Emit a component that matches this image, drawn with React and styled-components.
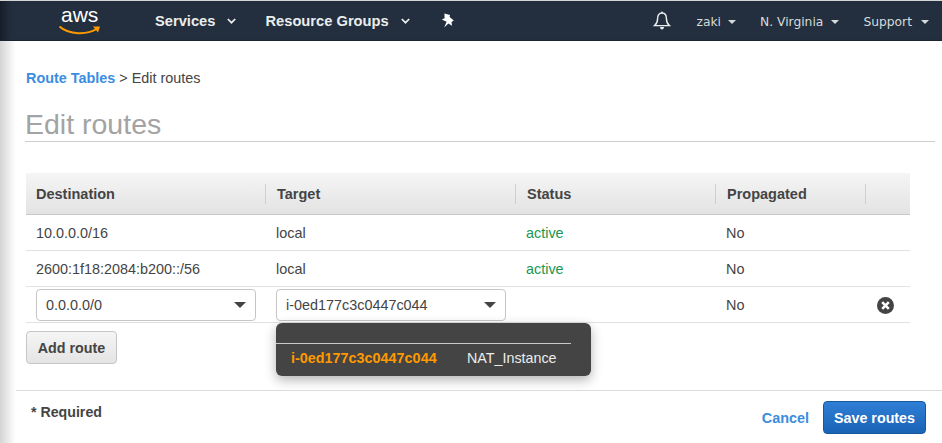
import styled, { createGlobalStyle } from 'styled-components';

const GlobalStyle = createGlobalStyle`
  html, body {
    margin: 0;
    padding: 0;
    background: #fff;
    overflow: hidden;
  }

  body {
    font-family: "Liberation Sans", Arial, sans-serif;
    font-size: 14.4px;
    color: #444;
  }
`;

const Page = styled.div`
  width: 942px;
  height: 443px;
  overflow: hidden;
  display: flex;
  flex-direction: column;
  border-top: 1px solid #d5d5d5;
  box-sizing: border-box;
`;

const TopBar = styled.header`
  flex: none;
  height: 40px;
  background: #232f3e;
  display: flex;
  align-items: center;
  box-shadow: inset 12px 0 10px -8px #131a24;
  border-bottom: 1px solid #1b2532;
  box-sizing: border-box;
`;

const LogoBox = styled.div`
  width: 155px;
  display: flex;
  padding-left: 58px;
  box-sizing: border-box;
`;

const NavMain = styled.a`
  display: flex;
  align-items: center;
  color: #eaeded;
  font-weight: 700;
  font-size: 14.7px;
  margin-right: ${(p) => p.$gap}px;
`;

const NavSide = styled.a`
  display: flex;
  align-items: center;
  color: #d5dbdb;
  font-family: "DejaVu Sans", Verdana, sans-serif;
  font-size: 12.3px;
  padding-top: 3px;
  margin-left: ${(p) => p.$gap}px;
`;

const Spacer = styled.div`
  flex: 1;
`;

const EdgeGap = styled.div`
  flex: none;
  width: 13px;
`;

const Body = styled.main`
  flex: 1;
  display: flex;
  min-height: 0;
`;

const SideShade = styled.div`
  flex: none;
  width: 16px;
  background: linear-gradient(90deg, #d4d4d4 0%, #e6e6e6 40%, #fafafa 85%, #fff 100%);
`;

const Content = styled.div`
  flex: 1;
  min-width: 0;
  display: flex;
  flex-direction: column;
`;

const Crumbs = styled.nav`
  margin: 29px 0 0 10px;
  line-height: 16px;
  color: #444;
`;

const CrumbLink = styled.a`
  color: #3b8de0;
  font-weight: 700;
`;

const Title = styled.h1`
  margin: 16px 7px 0 9px;
  height: 40px;
  line-height: 44px;
  box-sizing: border-box;
  font-size: 28.5px;
  font-weight: 400;
  color: #a3a3a3;
  border-bottom: 1px solid #ccc;
`;

const Table = styled.div`
  margin: 31px 0 0 10px;
  width: 884px;
`;

const Row = styled.div`
  display: grid;
  grid-template-columns: 240px 250px 200px 150px 44px;
  height: ${(p) => p.$h}px;
  box-sizing: border-box;
  align-items: center;
  border-bottom: 1px solid #e1e1e1;
`;

const HeadRow = styled(Row)`
  background: linear-gradient(#f5f5f5, #e3e3e3);
  border-bottom: 1px solid #c8c8c8;
`;

const HeadCell = styled.div`
  height: 20px;
  line-height: 20px;
  padding-left: ${(p) => (p.$first ? 10 : 11)}px;
  font-weight: 700;
  font-size: 14.5px;
  color: #444;
  border-right: ${(p) => (p.$last ? 'none' : '1px solid #cfcfcf')};
  box-sizing: border-box;
`;

const Cell = styled.div`
  padding-left: 10px;
  color: ${(p) => (p.$status ? '#1a9650' : '#444')};
  position: relative;
`;

const ControlCell = styled(Cell)`
  padding-left: 0;
`;

const SelectBox = styled.div`
  width: ${(p) => p.$w}px;
  height: 32px;
  margin-left: 10px;
  border: 1px solid #c6c6c6;
  border-radius: 4px;
  box-sizing: border-box;
  background: #fff;
  display: flex;
  align-items: center;
  justify-content: space-between;
  padding: 0 9px;
  color: #444;
`;

const Caret = styled.span`
  width: 0;
  height: 0;
  border-left: 6px solid transparent;
  border-right: 6px solid transparent;
  border-top: 6px solid #444;
`;

const Dropdown = styled.div`
  position: absolute;
  left: 10px;
  top: 34px;
  width: 315px;
  height: 53px;
  background: #444;
  border-radius: 6px;
  box-shadow: 0 4px 12px rgba(0, 0, 0, 0.3);
  z-index: 2;
`;

const DropRule = styled.div`
  padding-top: 20px;
  width: 295px;
  border-bottom: 1px solid #c8c8c8;
`;

const DropItem = styled.div`
  display: flex;
  padding: 6px 0 0 15px;
  line-height: 16px;
`;

const DropId = styled.span`
  width: 176px;
  color: #f90;
  font-weight: 700;
`;

const DropName = styled.span`
  color: #eaeded;
  font-size: 14.3px;
`;

const RemoveCell = styled.div`
  display: flex;
  justify-content: flex-end;
  padding: 1px 16px 0 0;
`;

const Plain = styled.button`
  font-family: inherit;
  font-weight: 700;
  font-size: 14.3px;
  padding: 0;
  box-sizing: border-box;
  border-radius: 4px;
`;

const AddButton = styled(Plain)`
  margin: 8px 0 0 10px;
  width: 91px;
  height: 33px;
  align-self: flex-start;
  color: #444;
  border: 1px solid #c6c6c6;
  background: linear-gradient(#f5f5f5, #e4e4e4);
`;

const Footer = styled.footer`
  margin-top: 26px;
  height: 53px;
  border-top: 1px solid #ddd;
  display: flex;
  justify-content: space-between;
  padding: 10px 16px 0 15px;
  box-sizing: border-box;
`;

const Required = styled.span`
  font-weight: 700;
  font-size: 14.2px;
  line-height: 22px;
  color: #444;
`;

const Actions = styled.div`
  display: flex;
  align-items: flex-start;
  gap: 14px;
`;

const CancelLink = styled.a`
  color: #3b8de0;
  font-weight: 700;
  line-height: 33px;
  padding-top: 1px;
`;

const SaveButton = styled(Plain)`
  width: 103px;
  height: 33px;
  color: #fff;
  border: 1px solid #15589f;
  background: linear-gradient(#2f7fd6, #1a63b5);
`;

const Chevron = ({ left }) => (
  <svg width="9" height="6" viewBox="0 0 9 6" style={{ marginLeft: left }}>
    <path d="M0.8 1 4.5 4.7 8.2 1" fill="none" stroke="#eaeded" strokeWidth="1.7" />
  </svg>
);

const SmallCaret = ({ left }) => (
  <svg width="8" height="4" viewBox="0 0 8 4" style={{ marginLeft: left }}>
    <path d="M0 0H8L4 4Z" fill="#d5dbdb" />
  </svg>
);

const AwsLogo = () => (
  <svg width="44" height="34" viewBox="0 0 44 34">
    <text x="3" y="18" fill="#fff" fontFamily="Liberation Sans, sans-serif" fontSize="21">aws</text>
    <path d="M1.5 22.5C11 31 29 31 38.5 25" fill="none" stroke="#f90" strokeWidth="2" />
    <path d="M35 22.5 42 22.5 40 28.5Z" fill="#f90" />
  </svg>
);

const Pin = () => (
  <svg width="14" height="15" viewBox="0 0 14 15">
    <path d="M3.4 0.6 9 2 8.6 4 12.8 7.6 10.5 9 11 12.8 7.4 10.4 3.2 14.5 5.6 8.8 0.8 6.6 3.6 5.2Z" fill="#fff" />
  </svg>
);

const Bell = () => (
  <svg width="18" height="20" viewBox="0 0 18 20">
    <path d="M9 2C5.8 2 4.6 4.6 4.6 7.4 4.6 10.8 3.4 13 1.6 14.6H16.4C14.6 13 13.4 10.8 13.4 7.4 13.4 4.6 12.2 2 9 2Z" fill="none" stroke="#eaeded" strokeWidth="1.4" />
    <path d="M7 16H11C11 17.6 10 18.4 9 18.4S7 17.6 7 16Z" fill="#eaeded" />
    <circle cx="9" cy="1.6" r="1" fill="#eaeded" />
  </svg>
);

const RemoveIcon = () => (
  <svg width="17" height="17" viewBox="0 0 17 17">
    <circle cx="8.5" cy="8.5" r="8.5" fill="#444" />
    <path d="M5.2 5.2 11.8 11.8M11.8 5.2 5.2 11.8" stroke="#fff" strokeWidth="2.6" />
  </svg>
);

const columns = ['Destination', 'Target', 'Status', 'Propagated', ''];

const routes = [
  { destination: '10.0.0.0/16', target: 'local', status: 'active', propagated: 'No' },
  { destination: '2600:1f18:2084:b200::/56', target: 'local', status: 'active', propagated: 'No' },
];

export default function App() {
  return (
    <>
      <GlobalStyle />
      <Page>
        <TopBar>
          <LogoBox><AwsLogo /></LogoBox>
          <NavMain $gap={29}>Services<Chevron left={12} /></NavMain>
          <NavMain $gap={31}>Resource Groups<Chevron left={12} /></NavMain>
          <Pin />
          <Spacer />
          <Bell />
          <NavSide $gap={25}>zaki<SmallCaret left={7} /></NavSide>
          <NavSide $gap={24}>N. Virginia<SmallCaret left={8} /></NavSide>
          <NavSide $gap={24}>Support<SmallCaret left={9} /></NavSide>
          <EdgeGap />
        </TopBar>
        <Body>
          <SideShade />
          <Content>
            <Crumbs><CrumbLink>Route Tables</CrumbLink> &gt; Edit routes</Crumbs>
            <Title>Edit routes</Title>
            <Table>
              <HeadRow $h={42}>
                {columns.map((name, i) => (
                  <HeadCell key={name || i} $first={i === 0} $last={i === columns.length - 1}>{name}</HeadCell>
                ))}
              </HeadRow>
              {routes.map((route) => (
                <Row key={route.destination} $h={36}>
                  <Cell>{route.destination}</Cell>
                  <Cell>{route.target}</Cell>
                  <Cell $status>{route.status}</Cell>
                  <Cell>{route.propagated}</Cell>
                  <Cell />
                </Row>
              ))}
              <Row $h={36}>
                <ControlCell>
                  <SelectBox $w={220}>0.0.0.0/0<Caret /></SelectBox>
                </ControlCell>
                <ControlCell>
                  <SelectBox $w={230}>i-0ed177c3c0447c044<Caret /></SelectBox>
                  <Dropdown>
                    <DropRule />
                    <DropItem>
                      <DropId>i-0ed177c3c0447c044</DropId>
                      <DropName>NAT_Instance</DropName>
                    </DropItem>
                  </Dropdown>
                </ControlCell>
                <Cell />
                <Cell>No</Cell>
                <RemoveCell><RemoveIcon /></RemoveCell>
              </Row>
            </Table>
            <AddButton>Add route</AddButton>
            <Footer>
              <Required>* Required</Required>
              <Actions>
                <CancelLink>Cancel</CancelLink>
                <SaveButton>Save routes</SaveButton>
              </Actions>
            </Footer>
          </Content>
        </Body>
      </Page>
    </>
  );
}
